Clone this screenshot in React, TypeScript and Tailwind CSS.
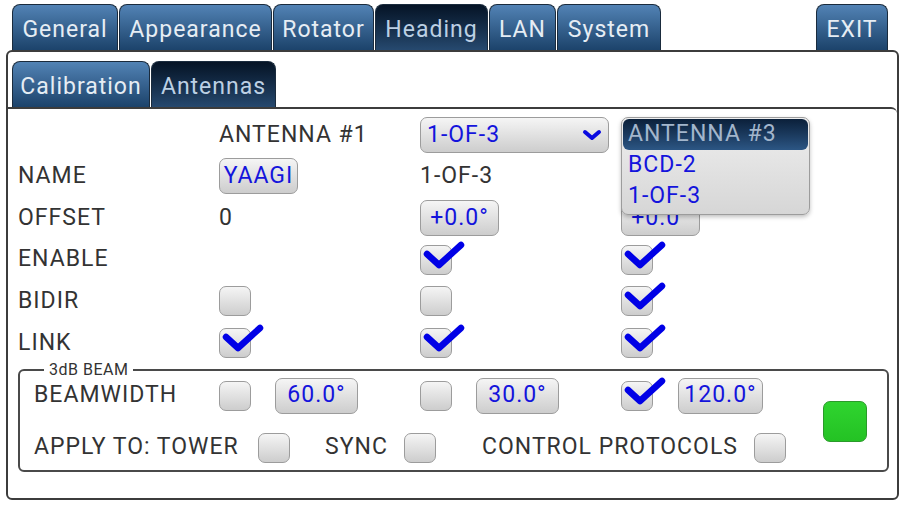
import React from "react"

const tabs = [
  { label: "General", w: "w-[106px]" },
  { label: "Appearance", w: "w-[153px]" },
  { label: "Rotator", w: "w-[101px]" },
  { label: "Heading", w: "w-[113px]", active: true },
  { label: "LAN", w: "w-[67px]" },
  { label: "System", w: "w-[104px]" },
]

const Tab = ({ label, w, active }: { label: string; w: string; active?: boolean }) => (
  <div
    className={`${w} h-[46px] mr-[1px] pt-[5px] rounded-t-[8px] border border-b-0 border-[#1a2b3d] flex items-center justify-center text-[23px] ${
      active
        ? "bg-linear-to-b from-[#061426] to-[#26496f] text-[#bcd0e4]"
        : "bg-linear-to-b from-[#5283b5] to-[#1c436b] text-[#e6edf4]"
    }`}
  >
    {label}
  </div>
)

const Check = () => (
  <svg className="absolute left-0 -top-[6px] w-[46px] h-[32px] pointer-events-none" viewBox="0 0 46 32">
    <path d="M6 14 L18 25 L40 5" fill="none" stroke="#0000e6" strokeWidth="6.5" strokeLinecap="round" strokeLinejoin="round" />
  </svg>
)

const Box = ({ checked }: { checked?: boolean }) => (
  <div className="relative shrink-0 w-[32px] h-[30px] rounded-[7px] border border-[#9c9c9c] bg-linear-to-b from-[#f5f5f5] to-[#cdcdcd]">
    {checked && <Check />}
  </div>
)

const Btn = ({ children, w }: { children: React.ReactNode; w: string }) => (
  <div
    className={`${w} shrink-0 h-[36px] rounded-[7px] border border-[#9c9c9c] bg-linear-to-b from-[#f5f5f5] to-[#cdcdcd] text-[#1414dc] flex items-center justify-center`}
  >
    {children}
  </div>
)

const Chevron = () => (
  <svg className="w-[20px] h-[12px]" viewBox="0 0 20 12">
    <path d="M3 3 L10 9 L17 3" fill="none" stroke="#0a0ae0" strokeWidth="4" strokeLinecap="round" strokeLinejoin="round" />
  </svg>
)

const App = () => {
  return (
    <div className="w-[905px] h-[508px] bg-white font-['Roboto',sans-serif] tracking-[1px] text-[#333] overflow-hidden">
      {/* Top tabs */}
      <div className="h-[50px] pt-[4px] pl-[12px] pr-[16px] flex items-end">
        {tabs.map(t => (
          <Tab key={t.label} {...t} />
        ))}
        <div className="ml-auto">
          <Tab label="EXIT" w="w-[72px]" />
        </div>
      </div>

      {/* Outer panel */}
      <div className="mx-[6px] h-[450px] border-2 border-[#3c3c3c] rounded-[6px] flex flex-col">
        <div className="pt-[9px] pl-[4px] flex items-end">
          <Tab label="Calibration" w="w-[138px]" />
          <Tab label="Antennas" w="w-[125px]" active />
        </div>

        {/* Inner panel */}
        <div className="flex-1 border-t-2 border-[#3c3c3c] rounded-tr-[6px] pl-[10px] pr-[8px] pt-[5px] text-[23px]">
          <div className="grid grid-cols-[201px_201px_201px_1fr] auto-rows-[41.6px] items-center">
            {/* Row 1 */}
            <div />
            <div>ANTENNA #1</div>
            <div className="w-[189px] h-[36px] rounded-[7px] border border-[#9c9c9c] bg-linear-to-b from-[#f5f5f5] to-[#cdcdcd] flex items-center justify-between pl-[6px] pr-[6px] text-[#1414dc]">
              <span>1-OF-3</span>
              <Chevron />
            </div>
            <div className="relative h-full">
              <div className="absolute z-10 top-[3px] left-0 w-[189px] h-[98px] rounded-[7px] border border-[#9c9c9c] bg-linear-to-b from-[#efefef] to-[#d6d6d6] shadow-[0_2px_4px_rgba(0,0,0,0.25)] p-[1px] flex flex-col">
                <div className="h-[31px] rounded-[6px] bg-linear-to-b from-[#0b203a] to-[#2c5684] text-[#a3b6cc] pl-[5px] flex items-center">
                  ANTENNA #3
                </div>
                <div className="h-[31px] pl-[5px] flex items-center text-[#1414dc]">BCD-2</div>
                <div className="h-[31px] pl-[5px] flex items-center text-[#1414dc]">1-OF-3</div>
              </div>
            </div>

            {/* NAME */}
            <div>NAME</div>
            <div>
              <Btn w="w-[79px]">YAAGI</Btn>
            </div>
            <div>1-OF-3</div>
            <div />

            {/* OFFSET */}
            <div>OFFSET</div>
            <div>0</div>
            <div>
              <Btn w="w-[79px]">+0.0°</Btn>
            </div>
            <div>
              <Btn w="w-[79px]">+0.0°</Btn>
            </div>

            {/* ENABLE */}
            <div>ENABLE</div>
            <div />
            <div>
              <Box checked />
            </div>
            <div>
              <Box checked />
            </div>

            {/* BIDIR */}
            <div>BIDIR</div>
            <div>
              <Box />
            </div>
            <div>
              <Box />
            </div>
            <div>
              <Box checked />
            </div>

            {/* LINK */}
            <div>LINK</div>
            <div>
              <Box checked />
            </div>
            <div>
              <Box checked />
            </div>
            <div>
              <Box checked />
            </div>
          </div>

          {/* 3dB BEAM */}
          <fieldset className="border-2 border-[#4a4a4a] rounded-[6px] pb-[2px]">
            <legend className="ml-[24px] px-[5px] text-[16px] leading-[12px] tracking-[0.5px] text-[#333]">3dB BEAM</legend>
            <div className="flex items-center">
              <div className="flex flex-col gap-[12px]">
                <div className="h-[40px] flex items-center">
                  <div className="w-[199px] pl-[14px]">BEAMWIDTH</div>
                  <div className="w-[201px] flex items-center gap-[24px]">
                    <Box />
                    <Btn w="w-[83px]">60.0°</Btn>
                  </div>
                  <div className="w-[201px] flex items-center gap-[24px]">
                    <Box />
                    <Btn w="w-[83px]">30.0°</Btn>
                  </div>
                  <div className="w-[201px] flex items-center gap-[25px]">
                    <Box checked />
                    <Btn w="w-[85px]">120.0°</Btn>
                  </div>
                </div>
                <div className="h-[40px] flex items-center">
                  <div className="w-[238px] pl-[14px]">APPLY TO: TOWER</div>
                  <Box />
                  <div className="ml-[35px] w-[79px]">SYNC</div>
                  <Box />
                  <div className="ml-[46px] w-[272px]">CONTROL PROTOCOLS</div>
                  <Box />
                </div>
              </div>
              <div className="ml-auto mr-[20px] w-[44px] h-[41px] rounded-[7px] border border-[#2a9a2a] bg-linear-to-b from-[#2fd42f] to-[#24c224]" />
            </div>
          </fieldset>
        </div>
      </div>
    </div>
  )
}

export default App
